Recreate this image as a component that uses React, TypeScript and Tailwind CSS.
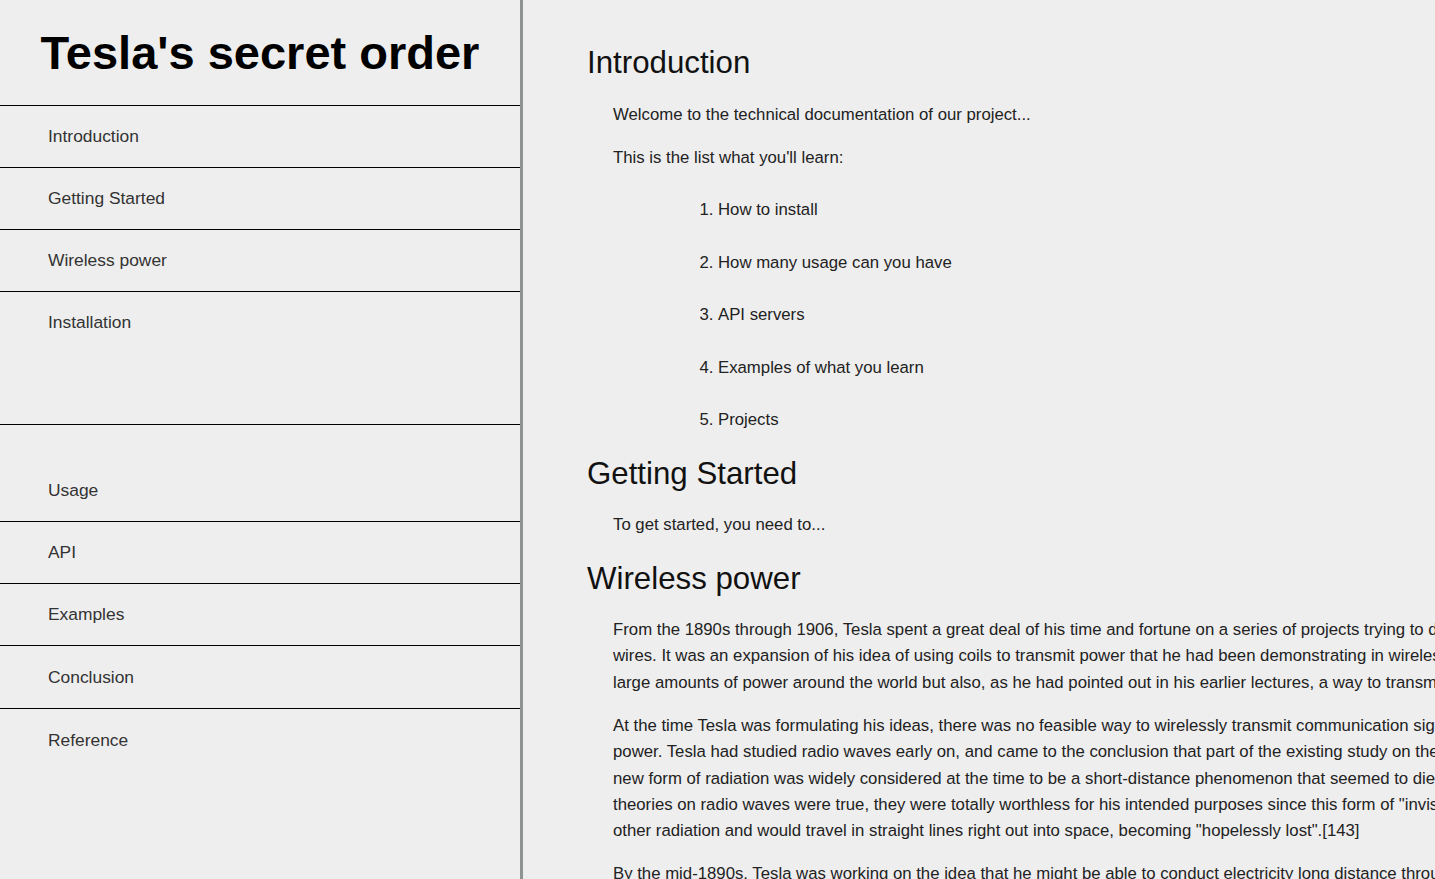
import React from 'react'

type NavItem = {
  label: string
  cls: string
}

const navItems: NavItem[] = [
  { label: 'Introduction', cls: 'h-[62px] border-b' },
  { label: 'Getting Started', cls: 'h-[62px] border-b' },
  { label: 'Wireless power', cls: 'h-[62px] border-b' },
  // this one has a big empty space under the label
  { label: 'Installation', cls: 'h-[133px] pb-[71px] border-b' },
  { label: 'Usage', cls: 'h-[97px] pt-[35px] border-b' },
  { label: 'API', cls: 'h-[62px] border-b' },
  { label: 'Examples', cls: 'h-[62px] border-b' },
  { label: 'Conclusion', cls: 'h-[63px] border-b' },
  { label: 'Reference', cls: 'h-[62px]' },
]

const learnList = [
  'How to install',
  'How many usage can you have',
  'API servers',
  'Examples of what you learn',
  'Projects',
]

const wireless: string[][] = [
  [
    'From the 1890s through 1906, Tesla spent a great deal of his time and fortune on a series of projects trying to develop the transmission of electrical power without',
    'wires. It was an expansion of his idea of using coils to transmit power that he had been demonstrating in wireless lighting. He saw this as not only a way to transmit',
    'large amounts of power around the world but also, as he had pointed out in his earlier lectures, a way to transmit worldwide communications.',
  ],
  [
    'At the time Tesla was formulating his ideas, there was no feasible way to wirelessly transmit communication signals over long distances, let alone large amounts of',
    'power. Tesla had studied radio waves early on, and came to the conclusion that part of the existing study on them, by Hertz, was incorrect.[141] Also, this',
    'new form of radiation was widely considered at the time to be a short-distance phenomenon that seemed to die out in less than a mile.[142] Tesla noted that, even if',
    'theories on radio waves were true, they were totally worthless for his intended purposes since this form of "invisible light" would diminish over a distance just like any',
    'other radiation and would travel in straight lines right out into space, becoming "hopelessly lost".[143]',
  ],
  [
    'By the mid-1890s, Tesla was working on the idea that he might be able to conduct electricity long distance through the Earth or the atmosphere, and began working on',
  ],
]

function Paragraph({ lines, className = '' }: { lines: string[]; className?: string }) {
  return (
    <p className={`whitespace-nowrap leading-[26.4px] ${className}`}>
      {lines.map((line, i) => (
        <React.Fragment key={i}>
          {line}
          {i < lines.length - 1 && <br />}
        </React.Fragment>
      ))}
    </p>
  )
}

export default function App() {
  return (
    <div
      className="flex h-[879px] w-full overflow-hidden bg-[#eeeeee]"
      style={{ fontFamily: '"Liberation Sans", Arial, sans-serif' }}
    >
      <nav className="w-[523px] shrink-0 border-r-[3px] border-[#8e9491]">
        <header className="flex h-[106px] items-center justify-center border-b border-black">
          <h1 className="text-[47px] font-bold leading-[54px] text-black">Tesla's secret order</h1>
        </header>
        <ul>
          {navItems.map((item) => (
            <li
              key={item.label}
              className={`flex items-center border-black pl-[48px] text-[17.4px] text-[#333] ${item.cls}`}
            >
              {item.label}
            </li>
          ))}
        </ul>
      </nav>

      <main className="min-w-0 flex-1 overflow-hidden pl-[64px] pt-[45px] text-[16.75px] text-[#222]">
        <section>
          <h2 className="text-[31.25px] leading-[36px] text-[#111]">Introduction</h2>
          <div className="pl-[26px]">
            <p className="mt-[21px] leading-[26px]">Welcome to the technical documentation of our project...</p>
            <p className="mt-[17px] leading-[26px]">This is the list what you'll learn:</p>
            <ol className="mt-[26px] flex list-decimal flex-col gap-[26.5px] pl-[105px]">
              {learnList.map((item) => (
                <li key={item} className="leading-[26px]">
                  {item}
                </li>
              ))}
            </ol>
          </div>
        </section>

        <section>
          <h2 className="mt-[23px] text-[31.25px] leading-[36px] text-[#111]">Getting Started</h2>
          <div className="pl-[26px]">
            <p className="mt-[20px] leading-[26px]">To get started, you need to...</p>
          </div>
        </section>

        <section>
          <h2 className="mt-[23px] text-[31.25px] leading-[36px] text-[#111]">Wireless power</h2>
          <div className="flex flex-col gap-[16.5px] pl-[26px] pt-[20px]">
            {wireless.map((lines, i) => (
              <Paragraph key={i} lines={lines} />
            ))}
          </div>
        </section>
      </main>
    </div>
  )
}
